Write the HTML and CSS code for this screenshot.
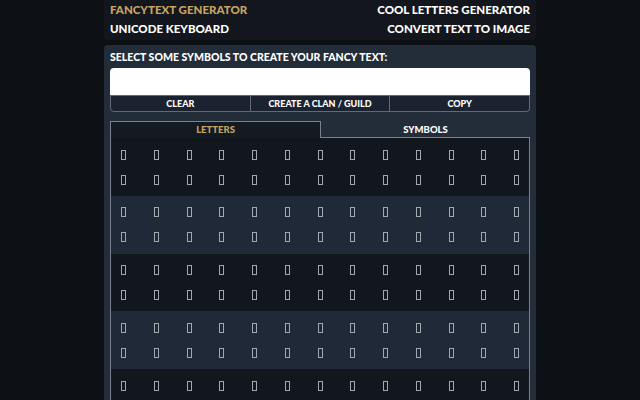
FILE: index.html
```html
<!DOCTYPE html>
<html lang="en">
<head>
  <meta charset="UTF-8" />
  <meta name="viewport" content="width=device-width, initial-scale=1.0"/>
  <title>Unicode Keyboard</title>

  <link rel="stylesheet" href="styles.css">
</head>

<body>
  <div class="wrap">
    <div class="topnav">
      <div class="nav-col">
        <a class="active" href="#">FancyText Generator</a>
        <a href="#">Unicode Keyboard</a>
      </div>
      <div class="nav-col right">
        <a href="#">Cool Letters Generator</a>
        <a href="#">Convert Text to Image</a>
      </div>
    </div>

    <div class="panel">
      <h2>Select some symbols to create your fancy text:</h2>
      <textarea id="output"></textarea>
      <div class="actions">
        <button onclick="clearText()">Clear</button>
        <button>Create a Clan / Guild</button>
        <button onclick="copyText()">Copy</button>
      </div>

      <div class="tabs">
        <div class="tab active">Letters</div>
        <div class="tab">Symbols</div>
      </div>

      <div class="keyboard" id="keyboard"></div>
    </div>
  </div>

  <script>
    const keyboard = document.getElementById("keyboard");
    const output = document.getElementById("output");

    // letters block starts at the "Mathematical Alphanumeric" range
    let code = 0x1D400;

    for (let b = 0; b < 6; b++) {
      const band = document.createElement("div");
      band.className = "band" + (b % 2 ? " light" : "");
      for (let r = 0; r < 2; r++) {
        const row = document.createElement("div");
        row.className = "key-row";
        for (let c = 0; c < 13; c++) {
          const key = document.createElement("span");
          key.className = "key";
          key.title = String.fromCodePoint(code);
          key.dataset.ch = String.fromCodePoint(code++);
          key.onclick = () => output.value += key.dataset.ch;
          row.appendChild(key);
        }
        band.appendChild(row);
      }
      keyboard.appendChild(band);
    }

    function clearText() {
      output.value = "";
    }

    function copyText() {
      output.select();
      document.execCommand("copy");
    }
  </script>
</body>
</html>
```

FILE: styles.css
```css
body {
  margin: 0;
  background: #0c0f13;
  font-family: "Lato", "Noto Sans", sans-serif;
  font-weight: 700;
  color: #fff;
  overflow: hidden;
}

.wrap {
  width: 432px;
  margin: 0 auto;
}

.topnav {
  display: flex;
  justify-content: space-between;
  background: #13171d;
  padding: 1px 6px 2px;
  border-radius: 0 0 4px 4px;
}

.nav-col {
  display: flex;
  flex-direction: column;
}

.nav-col.right {
  align-items: flex-end;
}

.topnav a {
  color: #fff;
  text-decoration: none;
  text-transform: uppercase;
  font-size: 11.5px;
  line-height: 18.5px;
  font-weight: 900;
}

.topnav a.active {
  color: #c8a462;
}

.panel {
  margin-top: 5px;
  background: #232c39;
  padding: 4px 6px 0;
  border-radius: 4px 4px 0 0;
  height: 400px;
}

.panel h2 {
  margin: 0 0 3px;
  font-size: 10.5px;
  line-height: 16px;
  font-weight: 900;
  text-transform: uppercase;
}

.panel textarea {
  display: block;
  box-sizing: border-box;
  width: 100%;
  height: 27px;
  margin: 0;
  border: none;
  border-radius: 4px 4px 0 0;
  background: #fff;
  resize: none;
}

.actions {
  display: flex;
}

.actions button {
  flex: 1;
  height: 17px;
  padding: 0;
  background: #1b2330;
  color: #fff;
  border: 1px solid #626a78;
  border-left: none;
  font-family: inherit;
  font-weight: 900;
  font-size: 9px;
  text-transform: uppercase;
  cursor: pointer;
}

.actions button:first-child {
  border-left: 1px solid #626a78;
  border-radius: 0 0 0 4px;
}

.actions button:last-child {
  border-radius: 0 0 4px 0;
}

.tabs {
  display: flex;
  margin-top: 9px;
}

.tab {
  flex: 1;
  height: 17px;
  line-height: 17px;
  text-align: center;
  font-size: 9.5px;
  font-weight: 900;
  text-transform: uppercase;
  box-sizing: border-box;
  border-bottom: 1px solid #7a818c;
}

.tab.active {
  color: #c8a462;
  background: #141a22;
  border: 1px solid #7a818c;
  border-bottom: none;
  line-height: 16px;
}

.keyboard {
  border-left: 1px solid #7a818c;
  border-right: 1px solid #7a818c;
}

.band {
  background: #12171e;
  padding: 4px 0 3.75px;
}

.band.light {
  background: #1f2937;
}

.key-row {
  display: flex;
  justify-content: space-between;
  align-items: center;
  height: 25px;
  padding: 0 10px;
}

.key {
  box-sizing: border-box;
  width: 5px;
  height: 10px;
  border: 1px solid #a3a8b0;
  cursor: pointer;
}
```
